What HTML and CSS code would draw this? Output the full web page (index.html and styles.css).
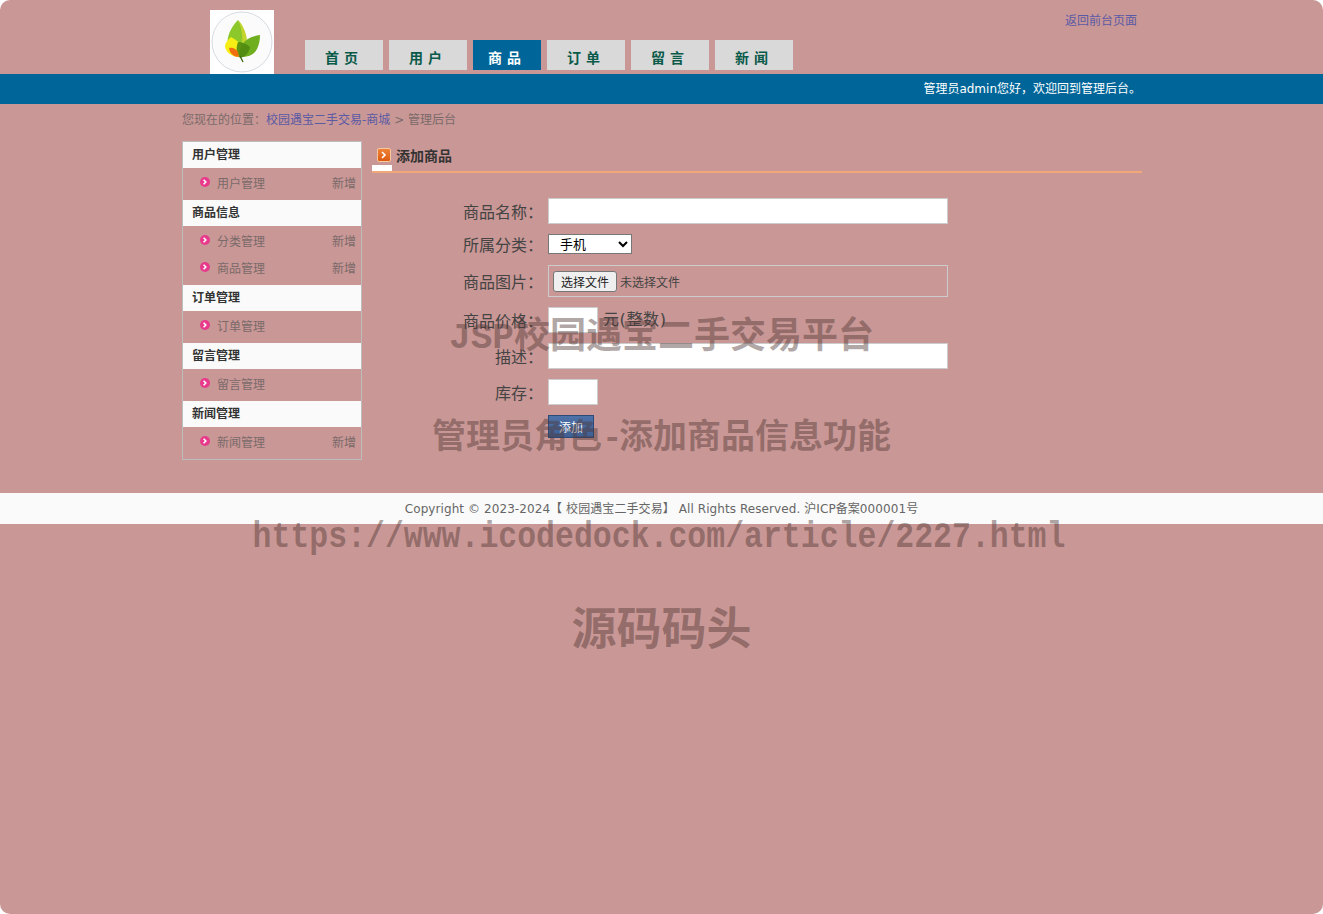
FILE: index.html
```html
<!DOCTYPE html>
<html lang="zh-CN">
<head>
<meta charset="utf-8">
<title>管理后台</title>
<link rel="stylesheet" href="styles.css">
</head>
<body>
<div class="page">
  <header class="top">
    <div class="top-inner">
      <div class="logo">
        <svg width="64" height="64" viewBox="0 0 64 64">
          <rect width="64" height="64" fill="#fff"/>
          <circle cx="32" cy="32" r="30" fill="#fbfbfb" stroke="#d5dbe0"/>
          <path d="M28 10C21 17 16 27 18 36l11 6c6-10 6-23-1-32z" fill="#8cc82a"/>
          <path d="M28 10c5 5 8 12 9 20l-5 6c1-9 0-18-4-26z" fill="#c4d42c"/>
          <path d="M21 27c-3 3-6 6-6 9 0 5 6 11 14 11l5-8c-3-5-7-9-13-12z" fill="#f6ee14"/>
          <path d="M50 25c-9 1-16 5-19 12-2 5-2 7-1 10 8 0 14-2 17-8 2-4 3-9 3-14z" fill="#6fae1e"/>
          <path d="M28 32c-1 3-2 6-1 10 1 3 2 5 3 6 5-1 9-5 10-11-3-3-8-5-12-5z" fill="#4f8a10" opacity=".9"/>
          <path d="M19 38c4-1 7 1 9 4l1 5c-5 0-9-3-10-9z" fill="#f07010"/>
          <path d="M30 46l3 6" stroke="#3f6d16" stroke-width="1.4" fill="none"/>
        </svg>
      </div>
      <nav class="nav">
        <a class="tab">首 页</a>
        <a class="tab">用 户</a>
        <a class="tab active">商 品</a>
        <a class="tab">订 单</a>
        <a class="tab">留 言</a>
        <a class="tab">新 闻</a>
      </nav>
      <a class="back">返回前台页面</a>
    </div>
  </header>
  <div class="bar"><div class="bar-inner">管理员admin您好，欢迎回到管理后台。</div></div>
  <div class="wrap">
    <div class="crumb">您现在的位置：<a class="link">校园遇宝二手交易-商城</a> &gt; 管理后台</div>
    <div class="columns">
      <aside class="side">
        <h3 class="side-h">用户管理</h3>
        <ul class="side-list">
          <li class="side-item"><svg class="dot" viewBox="0 0 10 10"><circle cx="5" cy="5" r="5" fill="#e83a8c"/><path d="M3.6 2.8L5.8 5 3.6 7.2" fill="none" stroke="#fff" stroke-width="1.6"/></svg><span class="side-name">用户管理</span><span class="side-add">新增</span></li>
        </ul>
        <h3 class="side-h">商品信息</h3>
        <ul class="side-list">
          <li class="side-item"><svg class="dot" viewBox="0 0 10 10"><circle cx="5" cy="5" r="5" fill="#e83a8c"/><path d="M3.6 2.8L5.8 5 3.6 7.2" fill="none" stroke="#fff" stroke-width="1.6"/></svg><span class="side-name">分类管理</span><span class="side-add">新增</span></li>
          <li class="side-item"><svg class="dot" viewBox="0 0 10 10"><circle cx="5" cy="5" r="5" fill="#e83a8c"/><path d="M3.6 2.8L5.8 5 3.6 7.2" fill="none" stroke="#fff" stroke-width="1.6"/></svg><span class="side-name">商品管理</span><span class="side-add">新增</span></li>
        </ul>
        <h3 class="side-h">订单管理</h3>
        <ul class="side-list">
          <li class="side-item"><svg class="dot" viewBox="0 0 10 10"><circle cx="5" cy="5" r="5" fill="#e83a8c"/><path d="M3.6 2.8L5.8 5 3.6 7.2" fill="none" stroke="#fff" stroke-width="1.6"/></svg><span class="side-name">订单管理</span></li>
        </ul>
        <h3 class="side-h">留言管理</h3>
        <ul class="side-list">
          <li class="side-item"><svg class="dot" viewBox="0 0 10 10"><circle cx="5" cy="5" r="5" fill="#e83a8c"/><path d="M3.6 2.8L5.8 5 3.6 7.2" fill="none" stroke="#fff" stroke-width="1.6"/></svg><span class="side-name">留言管理</span></li>
        </ul>
        <h3 class="side-h">新闻管理</h3>
        <ul class="side-list">
          <li class="side-item"><svg class="dot" viewBox="0 0 10 10"><circle cx="5" cy="5" r="5" fill="#e83a8c"/><path d="M3.6 2.8L5.8 5 3.6 7.2" fill="none" stroke="#fff" stroke-width="1.6"/></svg><span class="side-name">新闻管理</span><span class="side-add">新增</span></li>
        </ul>
      </aside>
      <main class="main">
        <div class="title">
          <svg class="title-icon" viewBox="0 0 14 14">
            <defs><linearGradient id="tg" x1="0" y1="0" x2="0" y2="1"><stop offset="0" stop-color="#f0843a"/><stop offset="1" stop-color="#dc5a12"/></linearGradient></defs>
            <rect x=".5" y=".5" width="13" height="13" rx="1.5" fill="url(#tg)" stroke="#f6c8a0"/>
            <path d="M5 4l3 3-3 3" fill="none" stroke="#fff" stroke-width="1.6"/>
          </svg>添加商品</div>
        <form class="form">
          <div class="row row-name"><label class="lab">商品名称：</label><input class="txt wide" type="text"></div>
          <div class="row row-cat"><label class="lab">所属分类：</label><select class="sel"><option>手机</option></select></div>
          <div class="row row-pic"><label class="lab">商品图片：</label><div class="file-box"><button class="file-btn" type="button">选择文件</button><span class="file-none">未选择文件</span></div></div>
          <div class="row row-price"><label class="lab">商品价格：</label><input class="txt short" type="text"><span class="unit">元(整数)</span></div>
          <div class="row row-desc"><label class="lab">描述：</label><input class="txt wide" type="text"></div>
          <div class="row row-stock"><label class="lab">库存：</label><input class="txt short" type="text"></div>
          <div class="row row-sub"><span class="lab"></span><button class="btn" type="button">添加</button></div>
        </form>
      </main>
    </div>
  </div>
  <footer class="foot">Copyright © 2023-2024【 校园遇宝二手交易】 All Rights Reserved. 沪ICP备案000001号</footer>
  <div class="mark mark1"><span class="latin">JSP</span>校园遇宝二手交易平台</div>
  <div class="mark mark2">管理员角色<span class="latin2">-</span>添加商品信息功能</div>
  <div class="mark mark3">https://www.icodedock.com/article/2227.html</div>
  <div class="mark mark4">源码码头</div>
</div>
</body>
</html>
```
FILE: styles.css
```css
* { box-sizing: border-box; }
html, body { margin: 0; padding: 0; height: 100%; background: #fff; }
body { font-family: "DejaVu Sans", "Noto Sans CJK SC", sans-serif; font-size: 12px; color: #666; }
.page { position: relative; height: 914px; background: #c99795; border-radius: 10px; overflow: hidden; }
.top-inner { width: 960px; height: 74px; margin-left: 182px; display: flex; position: relative; }
.logo { width: 64px; height: 64px; margin: 10px 0 0 28px; }
.logo svg { display: block; }
.nav { display: flex; gap: 6px; margin: 40px 0 0 31px; height: 30px; }
.tab { width: 78px; height: 30px; background: #d9d9d9; color: #0a5a4a; font-size: 14px; font-weight: bold; line-height: 34px; text-align: center; padding-right: 5px; font-family: "Noto Sans CJK SC", sans-serif; word-spacing: 2px; }
.tab.active { width: 68px; background: #006699; color: #fff; }
.back { margin-left: auto; margin-right: 5px; margin-top: 14px; color: #5a5aa5; line-height: 14px; height: 14px; }
.bar { height: 30px; background: #006699; }
.bar-inner { width: 960px; margin-left: 182px; text-align: right; padding-right: 1px; color: #fff; line-height: 30px; }
.wrap { width: 960px; margin-left: 182px; }
.crumb { height: 37px; padding-top: 9px; line-height: 14px; color: #7a6a6a; }
.link { color: #5a5aa5; }
.columns { display: flex; gap: 10px; }
.side { width: 180px; height: 319px; border: 1px solid #bcbcbc; }
.side-h { margin: 0; height: 26px; background: #fafafa; color: #333; font-size: 12px; line-height: 26px; padding-left: 9px; }
.side-list { margin: 0; padding: 1px 0 4px; list-style: none; }
.side-item { height: 27px; display: flex; align-items: center; padding: 0 5px 0 17px; color: #7a6a6a; }
.dot { width: 10px; height: 10px; margin-right: 7px; position: relative; top: -1px; }
.side-add { margin-left: auto; }
.main { width: 770px; }
.title { height: 32px; border-bottom: 2px solid #f0a878; font-size: 14px; font-weight: bold; color: #333; line-height: 30px; padding-left: 5px; display: flex; align-items: center; position: relative; }
.title::after { content: ""; position: absolute; left: 0; bottom: 0; width: 20px; height: 6px; background: #fff; }
.title-icon { width: 14px; height: 14px; margin: -2px 5px 0 0; }
.form { padding-top: 25px; }
.row { display: flex; align-items: center; }
.lab { width: 171px; margin-right: 5px; text-align: right; font-size: 16px; color: #444; }
.txt { height: 26px; border: 1px solid #ccc; background: #fff; padding: 0; margin: 0; }
.wide { width: 400px; }
.short { width: 50px; }
.sel { width: 84px; height: 20px; font-size: 13px; color: #000; background: #fff; padding-left: 7px; }
.file-box { width: 400px; height: 32px; border: 1px solid #ccc; display: flex; align-items: center; padding-left: 4px; }
.file-btn { width: 64px; height: 21px; padding: 0; font-size: 12px; font-family: inherit; color: #222; background: #efefef; border: 1px solid #767676; border-radius: 3px; }
.file-none { margin-left: 3px; color: #444; }
.unit { font-size: 16px; color: #444; margin: -4px 0 0 5px; letter-spacing: .6px; }
.row-name { height: 26px; }
.row-cat { height: 20px; margin-top: 10px; }
.row-pic { height: 32px; margin-top: 11px; }
.row-price { height: 26px; margin-top: 10px; }
.row-desc { height: 26px; margin-top: 10px; }
.row-stock { height: 26px; margin-top: 10px; }
.row-sub { height: 24px; margin-top: 9px; }
.btn { width: 46px; height: 23px; background: linear-gradient(#4d72a8, #3f5f92); border: 1px solid #2c4a78; color: #fff; font-size: 12px; padding: 0; font-family: inherit; }
.foot { position: absolute; left: 0; right: 0; top: 493px; height: 31px; background: #fafafa; text-align: center; line-height: 32px; color: #666; font-size: 12px; letter-spacing: .08px; }
.mark { position: absolute; left: 0; right: 0; text-align: center; font-weight: bold; color: rgba(80, 55, 55, .45); white-space: nowrap; font-family: "Noto Sans CJK SC", sans-serif; }
.latin { font-family: "Liberation Mono", monospace; }
.latin2 { font-family: "Liberation Mono", monospace; letter-spacing: -3.4px; }
.mark1 { top: 310px; font-size: 36px; line-height: 44px; }
.mark2 { top: 411px; font-size: 34px; line-height: 46px; }
.mark3 { top: 516px; right: 5px; font-size: 36px; line-height: 44px; font-family: "Liberation Mono", monospace; transform: scaleX(.875); }
.mark4 { top: 598px; font-size: 45px; line-height: 56px; }
```
